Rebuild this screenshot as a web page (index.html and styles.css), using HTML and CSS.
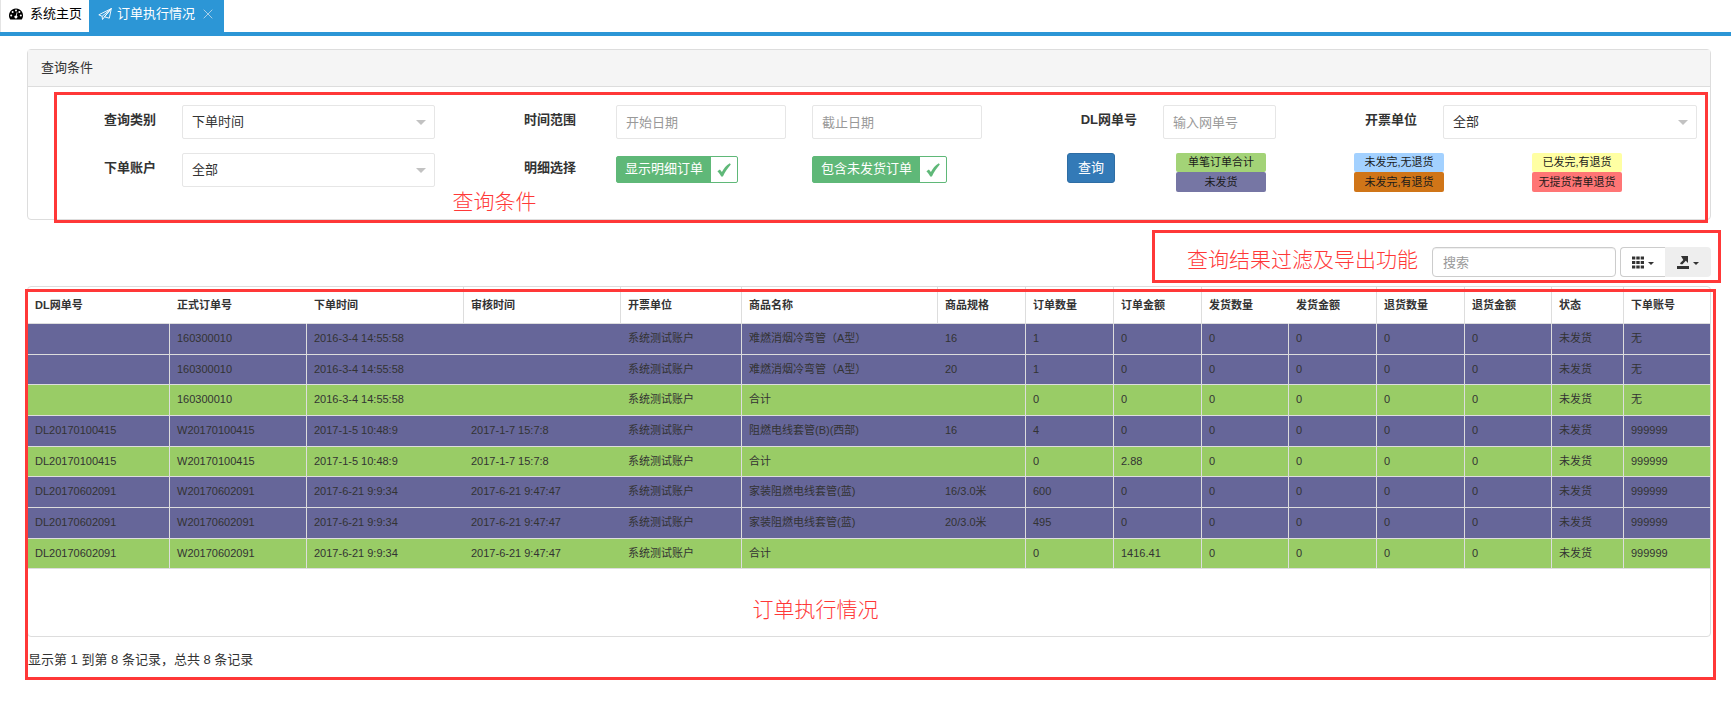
FILE: index.html
```html
<!DOCTYPE html>
<html lang="zh-CN">
<head>
<meta charset="utf-8">
<title>订单执行情况</title>
<link rel="stylesheet" href="styles.css">
</head>
<body>
<nav class="tabs">
  <a class="tab" href="#home">
    <svg class="tab-icon" viewBox="0 0 14 11" aria-hidden="true"><path d="M7 0a7 7 0 0 0-5.900 10.700q.2.300.600.300h10.600q.4 0 .6-.3A7 7 0 0 0 7 0z" fill="#000"/><g fill="#fff"><circle cx="2.200" cy="7" r="1"/><circle cx="3.600" cy="3.600" r="1"/><circle cx="7" cy="2.100" r="1"/><circle cx="10.400" cy="3.600" r="1"/><circle cx="11.800" cy="7" r="1"/><path d="M7.700 3.800l.8.200-.8 3.100a1.500 1.500 0 1 1-.8-.2z"/></g></svg>
    系统主页
  </a>
  <a class="tab active" href="#orders">
    <svg class="tab-icon" viewBox="0 0 14 12" aria-hidden="true"><path d="M13.300.600L.800 6.800l3.300 1.500L13.300.600l-2 9.600-4.800-1.400zM4.100 8.300l.4 3.200 2-2.700 6.800-8.200" fill="none" stroke="#fff" stroke-width=".9" stroke-linejoin="round"/></svg>
    订单执行情况
    <button class="close" type="button" aria-label="关闭"><svg viewBox="0 0 10 10"><path d="M.7.7l8.600 8.600M9.300.7L.7 9.300" stroke="#a9cfe9" stroke-width="1"/></svg></button>
  </a>
</nav>

<main class="page">
  <section class="panel">
    <h1 class="panel-title">查询条件</h1>
    <form class="filters">
      <div class="row row-fields">
        <label class="lbl" for="kind">查询类别</label>
        <div class="select"><select id="kind"><option>下单时间</option></select></div>
        <label class="lbl wide" for="from">时间范围</label>
        <input class="field" id="from" type="text" placeholder="开始日期">
        <span></span>
        <input class="field" type="text" placeholder="截止日期" aria-label="截止日期">
        <label class="lbl" for="dl">DL网单号</label>
        <input class="field" id="dl" type="text" placeholder="输入网单号">
        <label class="lbl" for="unit">开票单位</label>
        <div class="select"><select id="unit"><option>全部</option></select></div>
      </div>
      <div class="row row-options">
        <label class="lbl" for="account">下单账户</label>
        <div class="select"><select id="account"><option>全部</option></select></div>
        <span class="lbl wide">明细选择</span>
        <label class="toggle"><span class="toggle-text">显示明细订单</span><span class="toggle-box"><input type="checkbox" checked><svg viewBox="0 0 14 14"><path d="M.400 8.200l2.500-1.600 2 2.500C6.800 5.300 9.200 2.600 12.800.300l1 1.200C10.800 5 8.200 8.400 5.900 13.500H4.200C3.200 11.400 2 9.800.400 8.200z"/></svg></span></label>
        <label class="toggle"><span class="toggle-text">包含未发货订单</span><span class="toggle-box"><input type="checkbox" checked><svg viewBox="0 0 14 14"><path d="M.400 8.200l2.500-1.600 2 2.500C6.800 5.300 9.200 2.600 12.800.300l1 1.200C10.800 5 8.200 8.400 5.900 13.500H4.200C3.200 11.400 2 9.800.400 8.200z"/></svg></span></label>
        <button class="query" type="button">查询</button>
        <div class="legend"><span class="tag total">单笔订单合计</span><span class="tag unsent">未发货</span></div>
        <div class="legend"><span class="tag partial">未发完,无退货</span><span class="tag partial-return">未发完,有退货</span></div>
        <div class="legend"><span class="tag sent-return">已发完,有退货</span><span class="tag no-list">无提货清单退货</span></div>
      </div>
    </form>
    <div class="mark mark-filters"><span class="note">查询条件</span></div>
  </section>

  <section class="toolbar">
    <input class="search" type="text" placeholder="搜索" aria-label="搜索">
    <div class="group">
      <button class="tool" type="button" aria-label="列">
        <svg class="tool-icon" viewBox="0 0 12 12"><path d="M0 0h3.300v3H0zM4.300 0h3.400v3H4.300zM8.700 0H12v3H8.700zM0 4.500h3.300v3H0zM4.300 4.500h3.400v3H4.300zM8.700 4.500H12v3H8.700zM0 9h3.300v3H0zM4.300 9h3.400v3H4.300zM8.700 9H12v3H8.700z"/></svg><i class="caret"></i>
      </button>
      <button class="tool export" type="button" aria-label="导出">
        <svg class="tool-icon" viewBox="0 0 12 13"><path d="M0 10h12v3H0zM4 0h7v7L8.800 4.800 5.500 8.200H3.800L3 7.200l3.300-3.300z"/></svg><i class="caret"></i>
      </button>
    </div>
    <div class="mark mark-tools"><span class="note">查询结果过滤及导出功能</span></div>
  </section>

  <section class="results">
    <div class="grid">
      <table>
        <colgroup><col class="c142"><col class="c137"><col class="c157"><col class="c157"><col class="c121"><col class="c196"><col class="c88"><col class="c88"><col class="c88"><col class="c87"><col class="c88"><col class="c88"><col class="c87"><col class="c72"><col class="c86"></colgroup>
        <thead><tr><th>DL网单号</th><th>正式订单号</th><th>下单时间</th><th>审核时间</th><th>开票单位</th><th>商品名称</th><th>商品规格</th><th>订单数量</th><th>订单金额</th><th>发货数量</th><th>发货金额</th><th>退货数量</th><th>退货金额</th><th>状态</th><th>下单账号</th></tr></thead>
        <tbody>
          <tr><td></td><td>160300010</td><td>2016-3-4 14:55:58</td><td></td><td>系统测试账户</td><td>难燃消烟冷弯管（A型）</td><td>16</td><td>1</td><td>0</td><td>0</td><td>0</td><td>0</td><td>0</td><td>未发货</td><td>无</td></tr>
          <tr><td></td><td>160300010</td><td>2016-3-4 14:55:58</td><td></td><td>系统测试账户</td><td>难燃消烟冷弯管（A型）</td><td>20</td><td>1</td><td>0</td><td>0</td><td>0</td><td>0</td><td>0</td><td>未发货</td><td>无</td></tr>
          <tr class="sum"><td></td><td>160300010</td><td>2016-3-4 14:55:58</td><td></td><td>系统测试账户</td><td>合计</td><td></td><td>0</td><td>0</td><td>0</td><td>0</td><td>0</td><td>0</td><td>未发货</td><td>无</td></tr>
          <tr><td>DL20170100415</td><td>W20170100415</td><td>2017-1-5 10:48:9</td><td>2017-1-7 15:7:8</td><td>系统测试账户</td><td>阻燃电线套管(B)(西部)</td><td>16</td><td>4</td><td>0</td><td>0</td><td>0</td><td>0</td><td>0</td><td>未发货</td><td>999999</td></tr>
          <tr class="sum"><td>DL20170100415</td><td>W20170100415</td><td>2017-1-5 10:48:9</td><td>2017-1-7 15:7:8</td><td>系统测试账户</td><td>合计</td><td></td><td>0</td><td>2.88</td><td>0</td><td>0</td><td>0</td><td>0</td><td>未发货</td><td>999999</td></tr>
          <tr><td>DL20170602091</td><td>W20170602091</td><td>2017-6-21 9:9:34</td><td>2017-6-21 9:47:47</td><td>系统测试账户</td><td>家装阻燃电线套管(蓝)</td><td>16/3.0米</td><td>600</td><td>0</td><td>0</td><td>0</td><td>0</td><td>0</td><td>未发货</td><td>999999</td></tr>
          <tr><td>DL20170602091</td><td>W20170602091</td><td>2017-6-21 9:9:34</td><td>2017-6-21 9:47:47</td><td>系统测试账户</td><td>家装阻燃电线套管(蓝)</td><td>20/3.0米</td><td>495</td><td>0</td><td>0</td><td>0</td><td>0</td><td>0</td><td>未发货</td><td>999999</td></tr>
          <tr class="sum"><td>DL20170602091</td><td>W20170602091</td><td>2017-6-21 9:9:34</td><td>2017-6-21 9:47:47</td><td>系统测试账户</td><td>合计</td><td></td><td>0</td><td>1416.41</td><td>0</td><td>0</td><td>0</td><td>0</td><td>未发货</td><td>999999</td></tr>
        </tbody>
      </table>
    </div>
    <p class="count">显示第 1 到第 8 条记录，总共 8 条记录</p>
    <div class="mark mark-results"><span class="note">订单执行情况</span></div>
  </section>
</main>
</body>
</html>
```
FILE: styles.css
```css
* { box-sizing: border-box; }

body {
  margin: 0;
  background: #fff;
  color: #333;
  font: 13px/20px "Liberation Sans", "Noto Sans CJK SC", sans-serif;
}

input, select, button { font: inherit; color: inherit; }

/* Tabs */
.tabs {
  display: flex;
  border-bottom: 4px solid #2c96d6;
  height: 36px;
}
.tab {
  display: flex;
  align-items: center;
  gap: 7px;
  height: 32px;
  padding: 0 7px 4px 8px;
  color: #000;
  text-decoration: none;
}
.tab:first-child { border-left: 1px solid #e4e4e4; }
.tab.active {
  gap: 5px;
  padding: 0 11px 4px 9px;
  background: #2c96d6;
  color: #fff;
}
.tab-icon { width: 14px; height: 12px; }
.close {
  display: flex;
  margin: 0 0 0 3px;
  padding: 0;
  border: 0;
  background: none;
}
.close svg { width: 10px; height: 10px; }

.page { padding: 13px 20px 37px 27px; }

/* Query panel */
.panel {
  position: relative;
  border: 1px solid #ddd;
  border-radius: 4px;
}
.panel-title {
  margin: 0;
  padding: 8px 13px;
  border-bottom: 1px solid #ddd;
  background: #f5f5f5;
  font-size: 13px;
  font-weight: 400;
  line-height: 20px;
}
.filters {
  display: grid;
  gap: 14px;
  padding: 18px 0 27px;
}
.row { display: grid; align-items: start; }
.row-fields {
  grid-template-columns:
    minmax(0, 154fr) minmax(0, 253fr) minmax(0, 181fr) minmax(0, 170fr) minmax(0, 26fr)
    minmax(0, 170fr) minmax(0, 181fr) minmax(0, 113fr) minmax(0, 167fr) minmax(0, 254fr) 13px;
}
.row-options {
  grid-template-columns:
    minmax(0, 154fr) minmax(0, 253fr) minmax(0, 181fr) minmax(0, 196fr) minmax(0, 255fr)
    minmax(0, 109fr) minmax(0, 178fr) minmax(0, 178fr) minmax(0, 178fr);
}
.lbl {
  padding: 5px 26px 0 0;
  font-weight: 700;
  text-align: right;
}
.lbl.wide { padding-right: 40px; }
.field, .select select {
  width: 100%;
  height: 34px;
  padding: 0 9px;
  border: 1px solid #e6e6e6;
  border-radius: 2px;
  background: #fff;
}
::placeholder { color: #999; opacity: 1; }
.select { position: relative; }
.select select { appearance: none; display: block; }
.select::after {
  content: "";
  position: absolute;
  top: 15px;
  right: 9px;
  border: 5px solid transparent;
  border-top-color: #c2c2c2;
  border-bottom: 0;
}
.toggle {
  display: flex;
  justify-self: start;
  margin-top: 3px;
  border: 1px solid #5fb878;
  border-radius: 2px;
  white-space: nowrap;
}
.toggle-text {
  padding: 2px 8px 3px;
  background: #5fb878;
  color: #fff;
}
.toggle-box { display: grid; width: 26px; place-items: center; }
.toggle-box > * { grid-area: 1 / 1; }
.toggle-box input {
  appearance: none;
  width: 100%;
  height: 100%;
  margin: 0;
}
.toggle-box svg {
  width: 14px;
  height: 14px;
  fill: #5fb878;
  pointer-events: none;
}
.query {
  justify-self: start;
  height: 30px;
  padding: 0 10px;
  border: 1px solid #2e6da4;
  border-radius: 3px;
  background: #337ab7;
  color: #fff;
}
.legend {
  display: grid;
  width: 90px;
  font-size: 11px;
  text-align: center;
  white-space: nowrap;
  color: #1a1a1a;
}
.tag { border-radius: 2px; line-height: 20px; }
.tag:first-child { line-height: 19px; }
.total { background: #a3d377; }
.unsent { background: #7676a4; }
.partial { background: #a3d1ff; }
.partial-return { background: #d07518; }
.sent-return { background: #ffffa3; }
.no-list { background: #ff7575; }

/* Toolbar */
.toolbar {
  position: relative;
  display: flex;
  justify-content: flex-end;
  gap: 4px;
  padding: 27px 0 9px;
}
.search {
  width: 184px;
  height: 30px;
  padding: 0 10px;
  border: 1px solid #ccc;
  border-radius: 4px;
  box-shadow: inset 0 1px 1px #eee;
}
.group { display: flex; }
.tool {
  display: flex;
  align-items: center;
  gap: 4px;
  width: 45px;
  height: 30px;
  padding: 0 0 0 11px;
  border: 1px solid #ccc;
  border-right: 0;
  border-radius: 4px 0 0 4px;
  background: #fff;
}
.tool.export {
  width: 46px;
  padding-left: 12px;
  border: 0;
  border-radius: 0 4px 4px 0;
  background: #eee;
}
.tool-icon { width: 12px; height: 13px; fill: #333; }
.caret {
  margin-top: 3px;
  border: 3px solid transparent;
  border-top-color: #333;
  border-bottom: 0;
}

/* Results */
.results { position: relative; }
.grid {
  min-height: 351px;
  border: 1px solid #ddd;
  border-radius: 4px;
}
table {
  width: 100%;
  border-collapse: separate;
  border-spacing: 0;
  table-layout: fixed;
  font-size: 11px;
  line-height: 14px;
}
.c142 { width: 142px; }
.c137 { width: 137px; }
.c157 { width: 157px; }
.c121 { width: 121px; }
.c196 { width: 196px; }
.c88 { width: 88px; }
.c87 { width: 87px; }
.c72 { width: 72px; }
.c86 { width: 86px; }
th, td {
  padding: 7px 7px 9px;
  border: 0 solid #ddd;
  border-width: 0 1px 1px 0;
  text-align: left;
  white-space: nowrap;
}
th { padding: 11px 7px; }
th:nth-child(1), th:nth-child(2), th:nth-child(10) { border-right-color: transparent; }
td { background: #669; }
.sum td { background: #9c6; }
td:nth-child(3), td:nth-child(4), td:nth-child(6) { border-right-width: 0; }
th:last-child, td:last-child { border-right: 0; }
tbody tr:nth-child(3n+2) td { padding-bottom: 8px; }
.count { margin: 0; padding: 13px 0 0 1px; }

/* Red annotation frames */
.mark {
  position: absolute;
  border: 3px solid #ff3838;
  color: #ff3838;
  font-size: 21px;
  font-weight: 300;
  line-height: 30px;
  white-space: nowrap;
  pointer-events: none;
}
.note { position: absolute; }
.mark-filters { top: 42px; right: 2px; bottom: -4px; left: 26px; }
.mark-filters .note { top: 92px; left: 24%; }
.mark-tools { top: 10px; right: -10px; bottom: 3px; width: 569px; }
.mark-tools .note { top: 12px; left: 32px; }
.mark-results { top: 3px; right: -5px; bottom: -10px; left: -2px; }
.mark-results .note { top: 303px; left: 43%; }
```
